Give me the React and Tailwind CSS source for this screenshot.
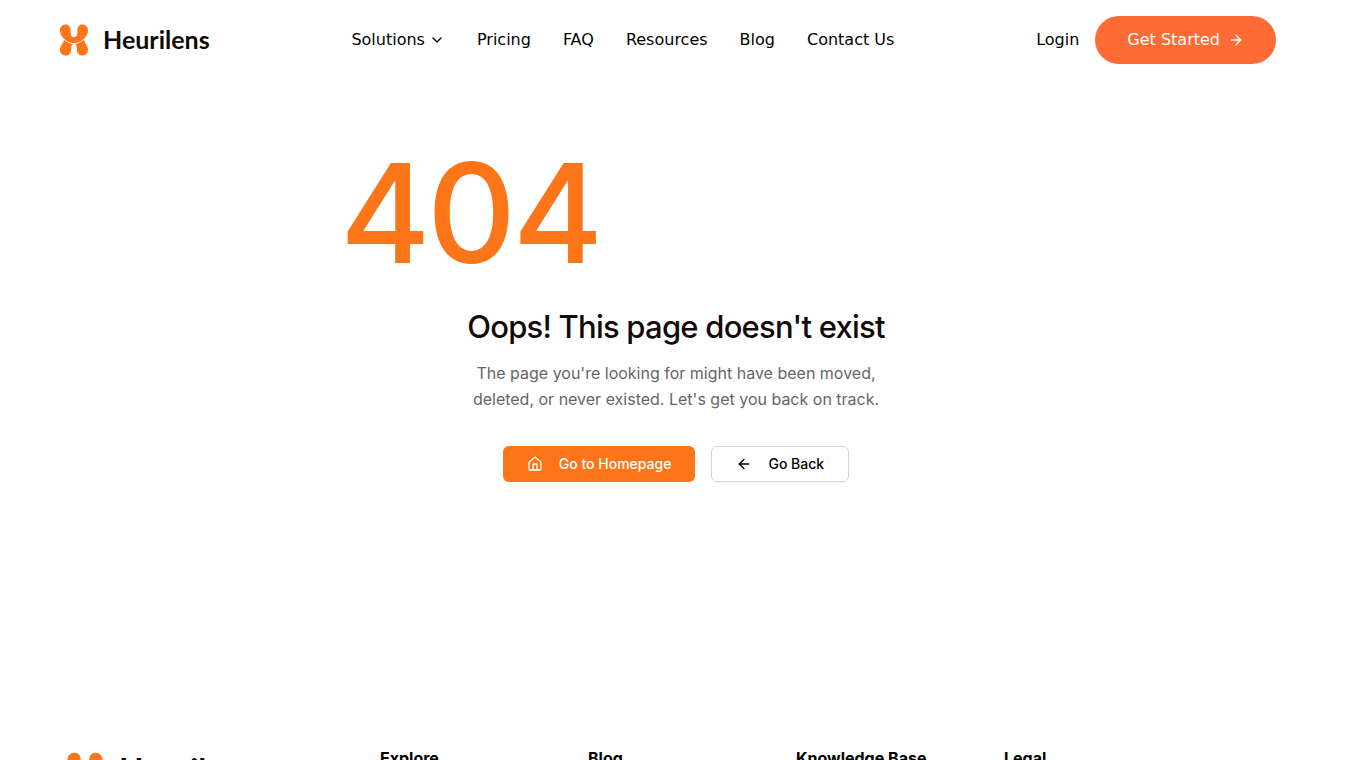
import { ArrowLeft, ArrowRight, ChevronDown, House } from 'lucide-react';

const NAV_LINKS = ['Pricing', 'FAQ', 'Resources', 'Blog', 'Contact Us'];
const FOOTER_COLUMNS = ['Explore', 'Blog', 'Knowledge Base', 'Legal'];

function LogoMark({ className }) {
  return (
    <svg viewBox="0 0 28 32" className={className} fill="#fc7518" aria-hidden="true">
      <path d="M5.6 0.5C9 0.5 10.6 3 10.6 6C10.6 9 10.2 13.2 14 13.2C17.8 13.2 17.4 9 17.4 6C17.4 3 19 0.5 22.4 0.5C25.8 0.5 28 3 28 6C28 9.5 26.4 12.4 24 14.8C21 17.6 18 19.2 14 19.2C10 19.2 7 17.6 4 14.8C1.6 12.4 0 9.5 0 6C0 3 2.2 0.5 5.6 0.5Z" />
      <path d="M4 15.8C6.6 18.2 9.2 19.6 12.8 20.1C11.2 21.6 11.2 23.6 11.1 26.2C10.9 29.3 8.7 31.5 5.6 31.5C2.4 31.5 0 29.2 0 25.8C0 21.8 3 20.4 4 15.8Z" />
      <path d="M24 15.8C21.4 18.2 18.8 19.6 15.2 20.1C16.8 21.6 16.8 23.6 16.9 26.2C17.1 29.3 19.3 31.5 22.4 31.5C25.6 31.5 28 29.2 28 25.8C28 21.8 25 20.4 24 15.8Z" />
    </svg>
  );
}

function Header() {
  return (
    <header className="flex h-20 items-center justify-between pl-15 pr-19 font-['DejaVu_Sans',sans-serif] text-base text-black">
      <a href="#" className="flex items-center gap-[15px]">
        <LogoMark className="h-8 w-7" />
        <span className="font-['Lato',sans-serif] text-[25px] font-bold text-[#120a08]">Heurilens</span>
      </a>
      <nav className="flex items-center gap-8">
        <button type="button" className="flex items-center gap-1">
          Solutions
          <ChevronDown className="size-4" />
        </button>
        {NAV_LINKS.map((label) => (
          <a key={label} href="#">
            {label}
          </a>
        ))}
      </nav>
      <div className="flex items-center gap-4">
        <a href="#">Login</a>
        <a href="#" className="flex h-12 items-center gap-2 rounded-full bg-[#ff6b35] px-8 text-white">
          Get Started
          <ArrowRight className="size-4" />
        </a>
      </div>
    </header>
  );
}

function NotFound() {
  return (
    <main className="mx-auto min-h-[602px] max-w-2xl pt-15 text-center">
      <h1 className="text-left text-[138px] leading-[146px] font-medium tracking-tight text-[#fc7518]">404</h1>
      <h2 className="mt-6 text-[31px] leading-[34px] font-medium tracking-tight text-[#120a08]">
        Oops! This page doesn't exist
      </h2>
      <p className="mx-auto mt-4 max-w-md text-base leading-[26px] text-[#666666]">
        The page you're looking for might have been moved, deleted, or never existed. Let's get you back on track.
      </p>
      <div className="mt-[34px] flex justify-center gap-4 text-sm font-medium">
        <a href="#" className="flex h-9 items-center gap-4 rounded-md bg-[#fc7518] px-6 text-white">
          <House className="size-4" />
          Go to Homepage
        </a>
        <button
          type="button"
          className="flex h-9 items-center gap-4 rounded-md border border-neutral-300 px-6 text-black shadow-xs"
        >
          <ArrowLeft className="size-4" />
          Go Back
        </button>
      </div>
    </main>
  );
}

function Footer() {
  return (
    <footer className="flex px-16 pt-16">
      <div className="w-79">
        <a href="#" className="flex items-start gap-4 pt-1 pl-[3px]">
          <LogoMark className="mt-0.5 h-10 w-9" />
          <span className="font-['Lato',sans-serif] text-[32px] leading-10 font-bold text-[#120a08]">Heurilens</span>
        </a>
      </div>
      <div className="grid max-w-196 flex-1 grid-cols-4 gap-12">
        {FOOTER_COLUMNS.map((title) => (
          <h3 key={title} className="text-base font-bold text-black">
            {title}
          </h3>
        ))}
      </div>
    </footer>
  );
}

export default function App() {
  return (
    <div className="h-screen overflow-hidden bg-white font-['Inter',sans-serif]">
      <Header />
      <NotFound />
      <Footer />
    </div>
  );
}
